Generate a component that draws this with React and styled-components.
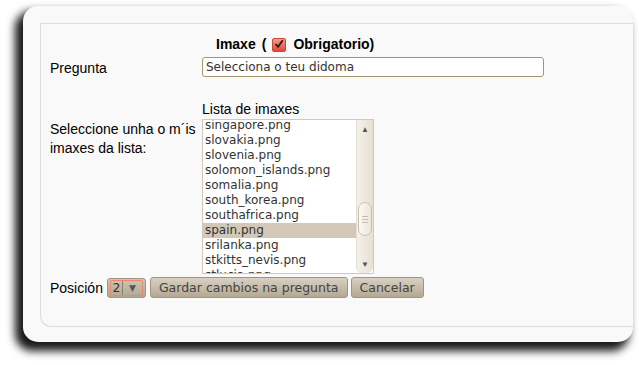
import React from 'react';
import styled, { createGlobalStyle } from 'styled-components';

const GlobalStyle = createGlobalStyle`
  html, body {
    margin: 0;
    padding: 0;
    background: #fff;
  }
  body {
    font-family: "Liberation Sans", Arial, sans-serif;
    color: #000;
  }
`;

const Page = styled.div`
  width: 639px;
  height: 365px;
  padding: 6px 0 0 23px;
  box-sizing: border-box;
  overflow: hidden;
`;

const Card = styled.div`
  width: 610px;
  height: 336px;
  box-sizing: border-box;
  padding: 17px 0 15px 17px;
  background: #f9f9f9;
  border-radius: 15px;
  box-shadow: -6px 7px 8px 2px rgba(0, 0, 0, 0.9);
`;

const Panel = styled.div`
  height: 100%;
  box-sizing: border-box;
  border: 1px solid #dcdcdc;
  border-right: none;
  border-radius: 0 0 0 11px;
  padding: 12px 0 0 9px;
`;

const FormGrid = styled.div`
  display: grid;
  grid-template-columns: 152px 342px;
  align-items: start;
`;

const Label = styled.div`
  font-size: 14px;
  line-height: 19px;
  padding-top: ${p => p.$top || 0}px;
  grid-column: 1;
`;

const Field = styled.div`
  grid-column: 2;
  margin-top: ${p => p.$mt || 0}px;
`;

const Title = styled.div`
  display: flex;
  align-items: center;
  gap: 6px;
  padding-left: 14px;
  font-size: 14px;
  font-weight: bold;
  line-height: 17px;
`;

const Check = styled.span`
  display: inline-block;
  position: relative;
  width: 12px;
  height: 12px;
  margin: 0 1px 0 0;
  border-radius: 2px;
  border: 1px solid #c9463c;
  background: linear-gradient(#f7988a, #e2483b);
  svg {
    position: absolute;
    left: 1px;
    top: 0;
  }
`;

const TextInput = styled.div`
  height: 20px;
  box-sizing: border-box;
  border: 1px solid #a8946c;
  border-radius: 3px;
  background: #fff;
  padding: 2px 3px;
  font-family: "DejaVu Sans", sans-serif;
  font-size: 12px;
  line-height: 15px;
  color: #333;
`;

const ListCaption = styled.div`
  font-size: 14px;
  line-height: 16px;
`;

const ListBox = styled.div`
  display: flex;
  width: 172px;
  height: 155px;
  box-sizing: border-box;
  border: 1px solid #d3c9b8;
  background: #fff;
  overflow: hidden;
`;

const Items = styled.div`
  flex: 1;
  overflow: hidden;
`;

const ItemList = styled.div`
  margin-top: -2px;
`;

const Item = styled.div`
  height: 15px;
  padding-left: 2px;
  font-family: "DejaVu Sans", sans-serif;
  font-size: 12px;
  line-height: 15px;
  color: #333;
  white-space: nowrap;
  background: ${p => (p.$selected ? '#d3c8b7' : 'transparent')};
`;

const Scrollbar = styled.div`
  width: 16px;
  border-left: 1px solid #e4ded2;
  border-radius: 0 0 6px 6px;
  background: linear-gradient(to right, #f4f1ea, #e6e0d4);
  display: flex;
  flex-direction: column;
  align-items: center;
`;

const Arrow = styled.div`
  height: 18px;
  display: flex;
  align-items: center;
  justify-content: center;
  font-size: 8px;
  color: #555;
`;

const Track = styled.div`
  flex: 1;
  width: 100%;
  display: flex;
  flex-direction: column;
  align-items: center;
  padding-top: ${p => p.$offset}px;
`;

const Thumb = styled.div`
  width: 14px;
  height: 34px;
  box-sizing: border-box;
  border: 1px solid #cabfa9;
  border-radius: 7px;
  background: linear-gradient(to right, #fbfaf6, #ebe5d9);
  display: flex;
  align-items: center;
  justify-content: center;
  span {
    display: block;
    width: 6px;
    height: 7px;
    border-top: 1px solid #c8bda8;
    border-bottom: 1px solid #c8bda8;
    box-sizing: border-box;
    position: relative;
  }
  span::after {
    content: '';
    position: absolute;
    left: 0;
    right: 0;
    top: 2px;
    border-top: 1px solid #c8bda8;
  }
`;

const Actions = styled.div`
  display: flex;
  align-items: center;
  margin-top: 3px;
  gap: 3px;
`;

const PosLabel = styled.span`
  font-size: 14px;
  margin-right: 1px;
`;

const Select = styled.div`
  display: flex;
  width: 39px;
  height: 20px;
  box-sizing: border-box;
  border: 1px solid #a09580;
  border-radius: 3px;
  padding: 1px 2px;
  background: linear-gradient(#cdc4b3, #b2a792);
  margin-right: 1px;
`;

const SelectInner = styled.div`
  flex: 1;
  display: flex;
  align-items: center;
  border: 1px solid #ec8670;
  border-radius: 2px;
  font-family: "DejaVu Sans", sans-serif;
  font-size: 12.5px;
  color: #333;
  span:first-child {
    width: 11px;
    text-align: center;
    border-right: 1px solid #8a7f6b;
    line-height: 14px;
  }
  span:last-child {
    flex: 1;
    text-align: center;
    font-size: 9px;
    color: #555;
  }
`;

const Button = styled.button`
  height: 21px;
  box-sizing: border-box;
  padding: 0 8px;
  border: 1px solid #a09580;
  border-radius: 3px;
  background: linear-gradient(#d8d0c2, #b4a892);
  font-family: "DejaVu Sans", sans-serif;
  font-size: 12.5px;
  color: #444;
  line-height: 18px;
`;

const images = [
  'singapore.png',
  'slovakia.png',
  'slovenia.png',
  'solomon_islands.png',
  'somalia.png',
  'south_korea.png',
  'southafrica.png',
  'spain.png',
  'srilanka.png',
  'stkitts_nevis.png',
  'stlucia.png',
];

export default function App() {
  return (
    <Page>
      <GlobalStyle />
      <Card>
        <Panel>
          <FormGrid>
            <Field>
              <Title>
                Imaxe <span>(</span>
                <Check>
                  <svg width="10" height="10" viewBox="0 0 10 10">
                    <path d="M1.5 5 L4 7.8 L8.8 1.2" fill="none" stroke="#2a1a1a" strokeWidth="1.8" />
                  </svg>
                </Check>
                Obrigatorio)
              </Title>
            </Field>

            <Label $top={6}>Pregunta</Label>
            <Field $mt={4}>
              <TextInput>Selecciona o teu didoma</TextInput>
            </Field>

            <Field $mt={23}>
              <ListCaption>Lista de imaxes</ListCaption>
            </Field>

            <Label $top={3}>Seleccione unha o m´is<br />imaxes da lista:</Label>
            <Field $mt={2}>
              <ListBox>
                <Items>
                  <ItemList>
                    {images.map(name => (
                      <Item key={name} $selected={name === 'spain.png'}>{name}</Item>
                    ))}
                  </ItemList>
                </Items>
                <Scrollbar>
                  <Arrow>▲</Arrow>
                  <Track $offset={64}>
                    <Thumb><span /></Thumb>
                  </Track>
                  <Arrow>▼</Arrow>
                </Scrollbar>
              </ListBox>
            </Field>
          </FormGrid>

          <Actions>
            <PosLabel>Posición</PosLabel>
            <Select>
              <SelectInner>
                <span>2</span>
                <span>▼</span>
              </SelectInner>
            </Select>
            <Button>Gardar cambios na pregunta</Button>
            <Button>Cancelar</Button>
          </Actions>
        </Panel>
      </Card>
    </Page>
  );
}
